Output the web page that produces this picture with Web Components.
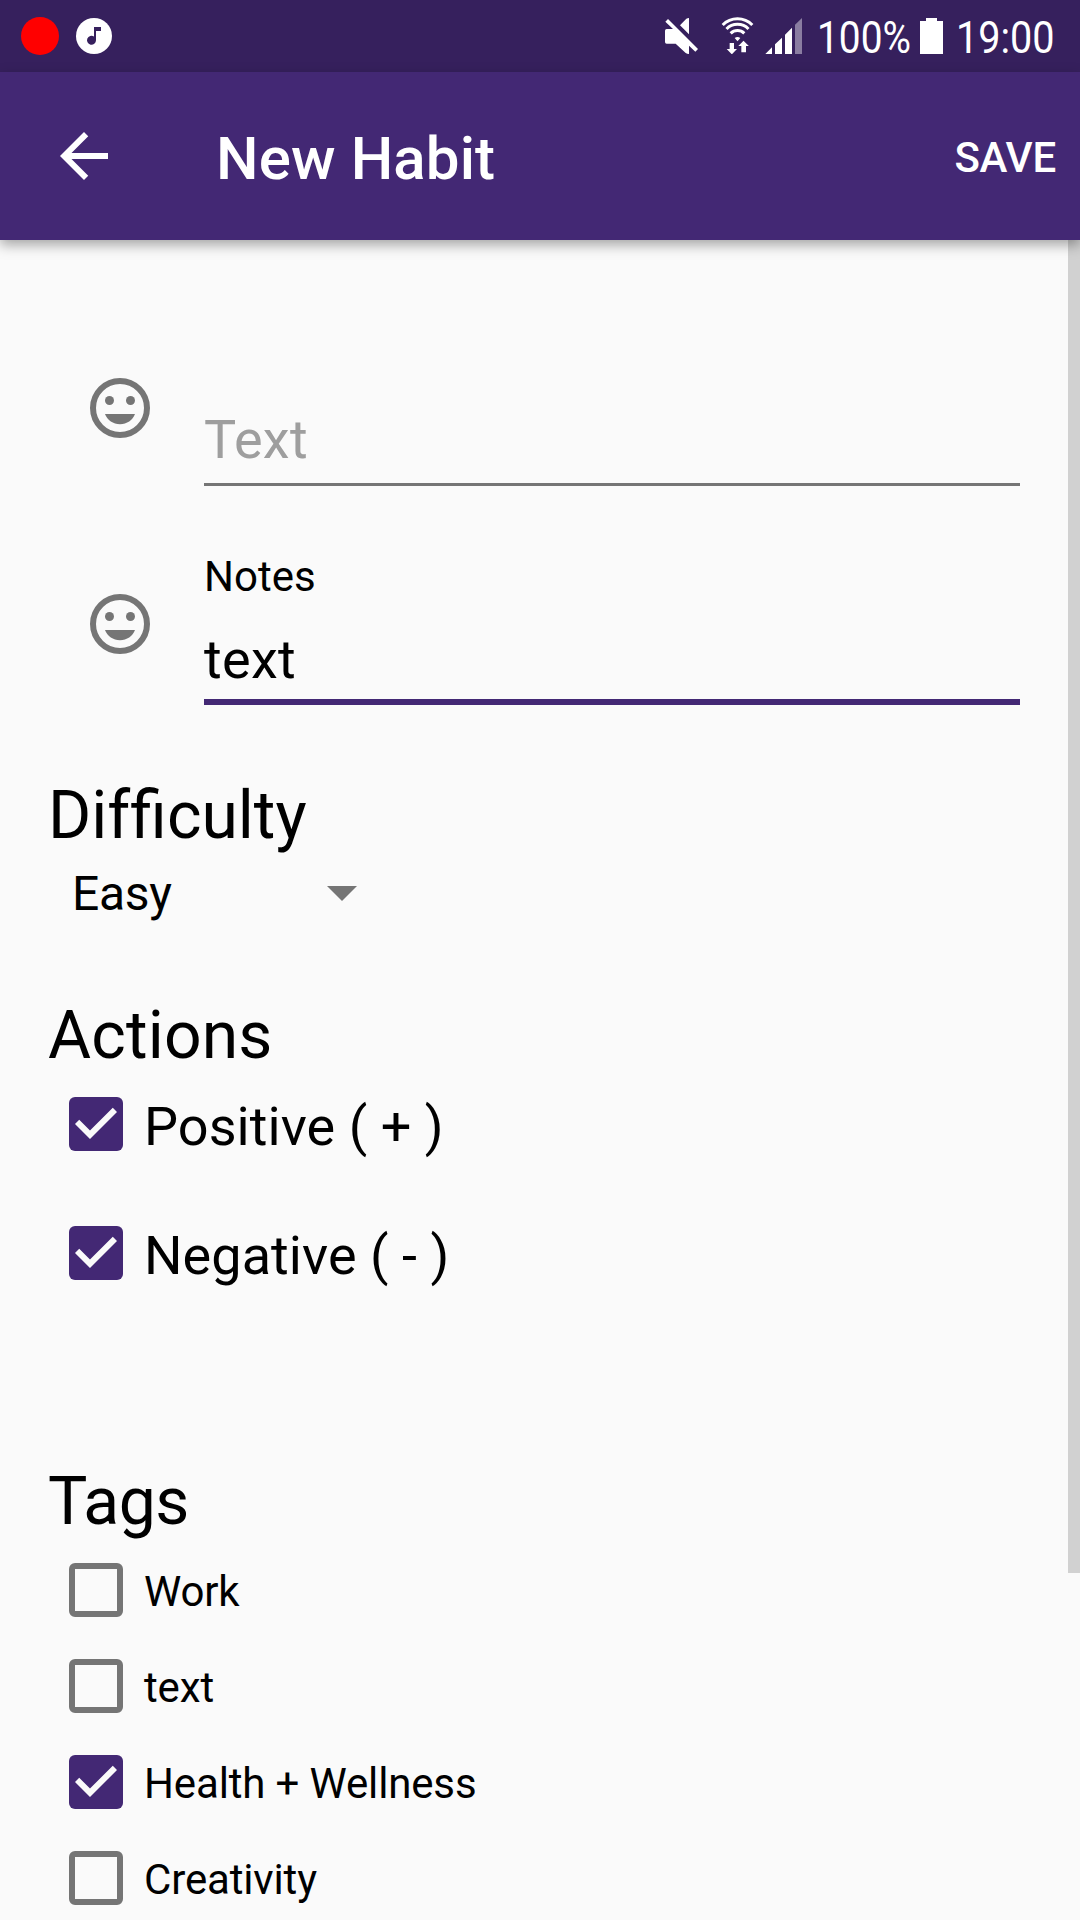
<!DOCTYPE html>
<html lang="en">
<head>
<meta charset="utf-8">
<title>New Habit</title>
<style>
html,body{margin:0;padding:0;background:#fafafa}
body{font-family:Roboto,"Noto Sans",sans-serif;color:#000}
</style>
</head>
<body>
<habit-screen></habit-screen>
<script>
const define = (name, html, setup) => {
  const tpl = document.createElement('template');
  tpl.innerHTML = html;
  customElements.define(name, class extends HTMLElement {
    constructor() {
      super();
      this.attachShadow({ mode: 'open' }).appendChild(tpl.content.cloneNode(true));
    }
    connectedCallback() { if (setup) setup(this, this.shadowRoot); }
  });
};

define('status-bar', `
<style>
:host{display:flex;box-sizing:border-box;width:1080px;height:72px;background:#36205d;color:#fff;align-items:flex-start;padding-left:21px}
svg{display:block;flex:none}
.rec{margin-top:17px}.music{margin:18px 0 0 17px}
.mute{margin:18px 0 0 553px}.wifi{margin:17px 0 0 23px}.signal{margin:18px 0 0 11px}
.battery{margin-top:18px}
.t{font-size:45px;line-height:53px;margin-top:11px;white-space:nowrap;flex:none;transform:scaleX(.87);transform-origin:0 0}
.pct{margin-left:15px;width:103px;transform:scaleX(.863)}
.time{margin-left:13px;transform:scaleX(.88)}
</style>
<svg class="rec" width="38" height="38"><circle cx="19" cy="19" r="19" fill="#f00"/></svg>
<svg class="music" width="36" height="36" viewBox="228 54 108 108"><circle cx="282" cy="108" r="54" fill="#fff"/><path fill="#36205d" d="M282 81h21v12h-15v28a13.500 13.500 0 1 1-6-11.500z"/></svg>
<svg class="mute" width="33" height="36" viewBox="75 54 99 108" fill="#fff"><path d="M120 76l19-20q4-2 8-2v49zM84 57l90 90-8 8-19-18v25q-6 0-10-3l-30-28H80q-5 0-5-5V92q0-5 5-5h19L76 65z"/></svg>
<svg class="wifi" width="33" height="37" viewBox="243 51 99 111" fill="none" stroke="#fff" stroke-width="9"><path d="M248 75a63 63 0 0 1 89 0M259.500 87a46 46 0 0 1 66 0M272 100a29 29 0 0 1 41 0"/><path stroke="none" fill="#fff" d="M284 114q8.500-6 17 0l-8.500 10zM269 129h13v18h9l-15.500 16L260 147h9zM304 157v-19h-9l15.500-16 16 16H318v19z"/></svg>
<svg class="signal" width="37" height="36" viewBox="375 54 111 108" fill="#fff"><path d="M376 162l20-20v20zM405 162v-29l21-20v49zM435 162v-58l21-21v79z"/><path opacity=".42" d="M465 162V74l21-20v108z"/></svg>
<span class="t pct">100%</span>
<svg class="battery" width="23" height="36" viewBox="840 54 69 108" fill="#fff"><path d="M858 54h33v9h18v99h-69V63h18z"/></svg>
<span class="t time">19:00</span>`);

define('app-bar', `
<style>
:host{display:flex;position:relative;z-index:1;box-sizing:border-box;width:1080px;height:168px;background:#432874;color:#fff;padding:0 24px 0 48px;align-items:flex-start;box-shadow:0 5px 12px rgba(0,0,0,.34)}
svg{display:block;margin-top:48px}
.title{font-size:60px;line-height:71px;font-weight:500;margin:51px 0 0 96px;flex:1;white-space:nowrap;letter-spacing:.13px}
.action{font-size:42px;line-height:49px;font-weight:500;margin-top:61px;letter-spacing:-.2px}
</style>
<svg width="72" height="72" viewBox="0 0 24 24" fill="#fff"><path d="M20 11H7.830l5.590-5.590L12 4l-8 8 8 8 1.410-1.410L7.830 13H20z"/></svg>
<div class="title"><slot></slot></div>
<div class="action"><slot name="action"></slot></div>`);

define('text-field', `
<style>
:host{display:flex;box-sizing:border-box;height:216px;padding:0 60px 0 84px;align-items:flex-start}
svg{display:block;flex:none;margin-top:72px}
.col{flex:1;margin-left:48px;display:flex;flex-direction:column}
.label{margin-top:36px;height:49px;font-size:42px;line-height:49px}
.value{font-size:54px;line-height:63px;margin:27px 0 8px;letter-spacing:.3px}
.line{height:6px;background:#432874}
:host([empty]) .value{color:#9e9e9e;margin:23px 0 12px}
:host([empty]) .line{height:3px;background:#757575}
</style>
<svg width="72" height="72" viewBox="0 0 24 24"><circle cx="12" cy="12" r="9" fill="none" stroke="#757575" stroke-width="2"/><g fill="#757575"><circle cx="8.500" cy="9.500" r="1.500"/><circle cx="15.500" cy="9.500" r="1.500"/><path d="M7 14h10c-.8 2.040-2.700 3.400-5 3.400S7.800 16.040 7 14z"/></g></svg>
<div class="col"><div class="label"><slot name="label"></slot></div><div class="value"><slot></slot></div><div class="line"></div></div>`);

define('form-section', `
<style>
:host{display:flex;flex-direction:column}
.h{font-size:66px;line-height:77px;padding-left:48px;letter-spacing:var(--track,0)}
.body{display:flex;flex-direction:column;margin-top:var(--lead);gap:var(--gap,0)}
</style>
<div class="h"><slot name="heading"></slot></div><div class="body"><slot></slot></div>`);

define('drop-down', `
<style>
:host{display:flex;box-sizing:border-box;width:357px;height:57px;padding-left:72px;font-size:48px;line-height:57px;letter-spacing:-.3px;justify-content:space-between}
svg{display:block;margin-top:21px}
</style>
<span><slot></slot></span><svg width="30" height="15" viewBox="0 0 10 5"><path fill="#757575" d="M0 0h10L5 5z"/></svg>`);

define('check-item', `
<style>
:host{display:flex;height:54px;padding-left:69px;font-size:42px;line-height:49px;letter-spacing:-.15px;align-items:flex-start}
:host([large]){height:63px;font-size:54px;line-height:63px;letter-spacing:.06px}
svg{display:block;flex:none}
:host([large]) svg{margin-top:2px}
span{margin:4px 0 0 21px;white-space:nowrap}
:host([large]) span{margin-top:0}
.on{display:none}
:host([checked]) .on{display:inline}
:host([checked]) .off{display:none}
</style>
<svg width="54" height="54" viewBox="3 3 18 18"><rect class="off" x="4" y="4" width="16" height="16" rx="1" fill="none" stroke="#757575" stroke-width="2"/><g class="on"><rect x="3" y="3" width="18" height="18" rx="2" fill="#432874"/><path fill="#fafafa" d="M10 17l-5-5 1.410-1.410L10 14.170l7.590-7.590L19 8z"/></g></svg>
<span><slot></slot></span>`);

define('habit-screen', `
<style>
:host{display:flex;flex-direction:column;width:1080px;height:1920px;overflow:hidden;background:#fafafa}
main{flex:1;display:flex;min-height:0}
.form{flex:1;min-width:0;width:1068px;padding-top:60px}
.bar{flex:none;width:12px;height:1333px;background:#d1d1d1}
text-field{margin-right:-12px}
.difficulty{margin-top:45px;--lead:11px}
.actions{margin-top:75px;--lead:21px;--gap:66px;--track:.17px}
.tags{margin-top:176px;--lead:23px;--gap:42px;--track:-.5px}
.part{display:inline-block}
</style>
<status-bar></status-bar>
<app-bar>New Habit<span slot="action">SAVE</span></app-bar>
<main>
<div class="form">
<text-field empty>Text</text-field>
<text-field><span slot="label">Notes</span>text</text-field>
<form-section class="difficulty"><span slot="heading"><span class="part">Dif</span>ficulty</span><drop-down>Easy</drop-down></form-section>
<form-section class="actions"><span slot="heading">Actions</span><check-item large checked>Positive ( + )</check-item><check-item large checked>Negative ( - )</check-item></form-section>
<form-section class="tags"><span slot="heading">Tags</span><check-item>Work</check-item><check-item>text</check-item><check-item checked>Health + Wellness</check-item><check-item>Creativity</check-item></form-section>
</div>
<div class="bar"></div>
</main>`);
</script>
</body>
</html>
